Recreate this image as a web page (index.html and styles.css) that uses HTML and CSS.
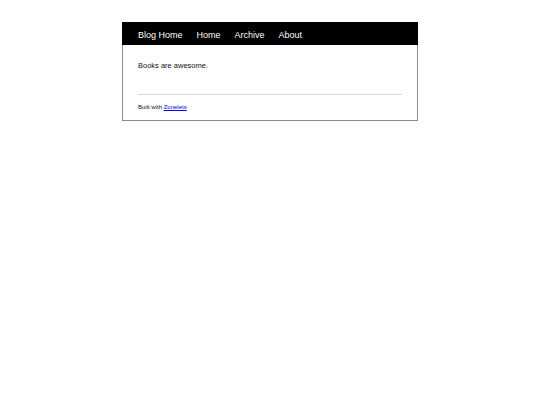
FILE: index.html
```html
<!DOCTYPE html>
<html lang="en">
<head>
<meta charset="utf-8">
<title>Blog</title>
<link rel="stylesheet" href="styles.css">
</head>
<body>
<div class="page">
  <header class="header">
    <nav class="nav">
      <a href="#">Blog Home</a>
      <a href="#">Home</a>
      <a href="#">Archive</a>
      <a href="#">About</a>
    </nav>
  </header>
  <main class="main">
    <p class="text">Books are awesome.</p>
    <hr class="rule">
    <footer class="footer">Built with <a href="#" class="footer-link">Zonelets</a></footer>
  </main>
</div>
</body>
</html>
```

FILE: styles.css
```css
html, body {
  margin: 0;
  padding: 0;
  background: #fff;
}
body {
  font-family: "Liberation Sans", Arial, sans-serif;
  color: #111;
}
.page {
  box-sizing: border-box;
  width: 296px;
  margin: 22px auto 0;
  border: 1px solid #8c8c8c;
}
.header {
  background: #000;
  margin: -1px -1px 0;
  padding: 8px 0 5px 16px;
}
.nav {
  display: flex;
  gap: 14px;
}
.nav a {
  color: #fff;
  text-decoration: none;
  font-size: 9px;
  line-height: 10px;
}
.main {
  padding: 16px 15px 9px;
}
.text {
  margin: 0;
  font-size: 7.5px;
  line-height: 9px;
}
.rule {
  margin: 24px 0 0;
  border: 0;
  border-top: 1px solid #d9d9d9;
  height: 0;
}
.footer {
  margin-top: 9px;
  font-size: 6px;
  line-height: 7px;
}
.footer-link {
  color: #0000ee;
}
```
